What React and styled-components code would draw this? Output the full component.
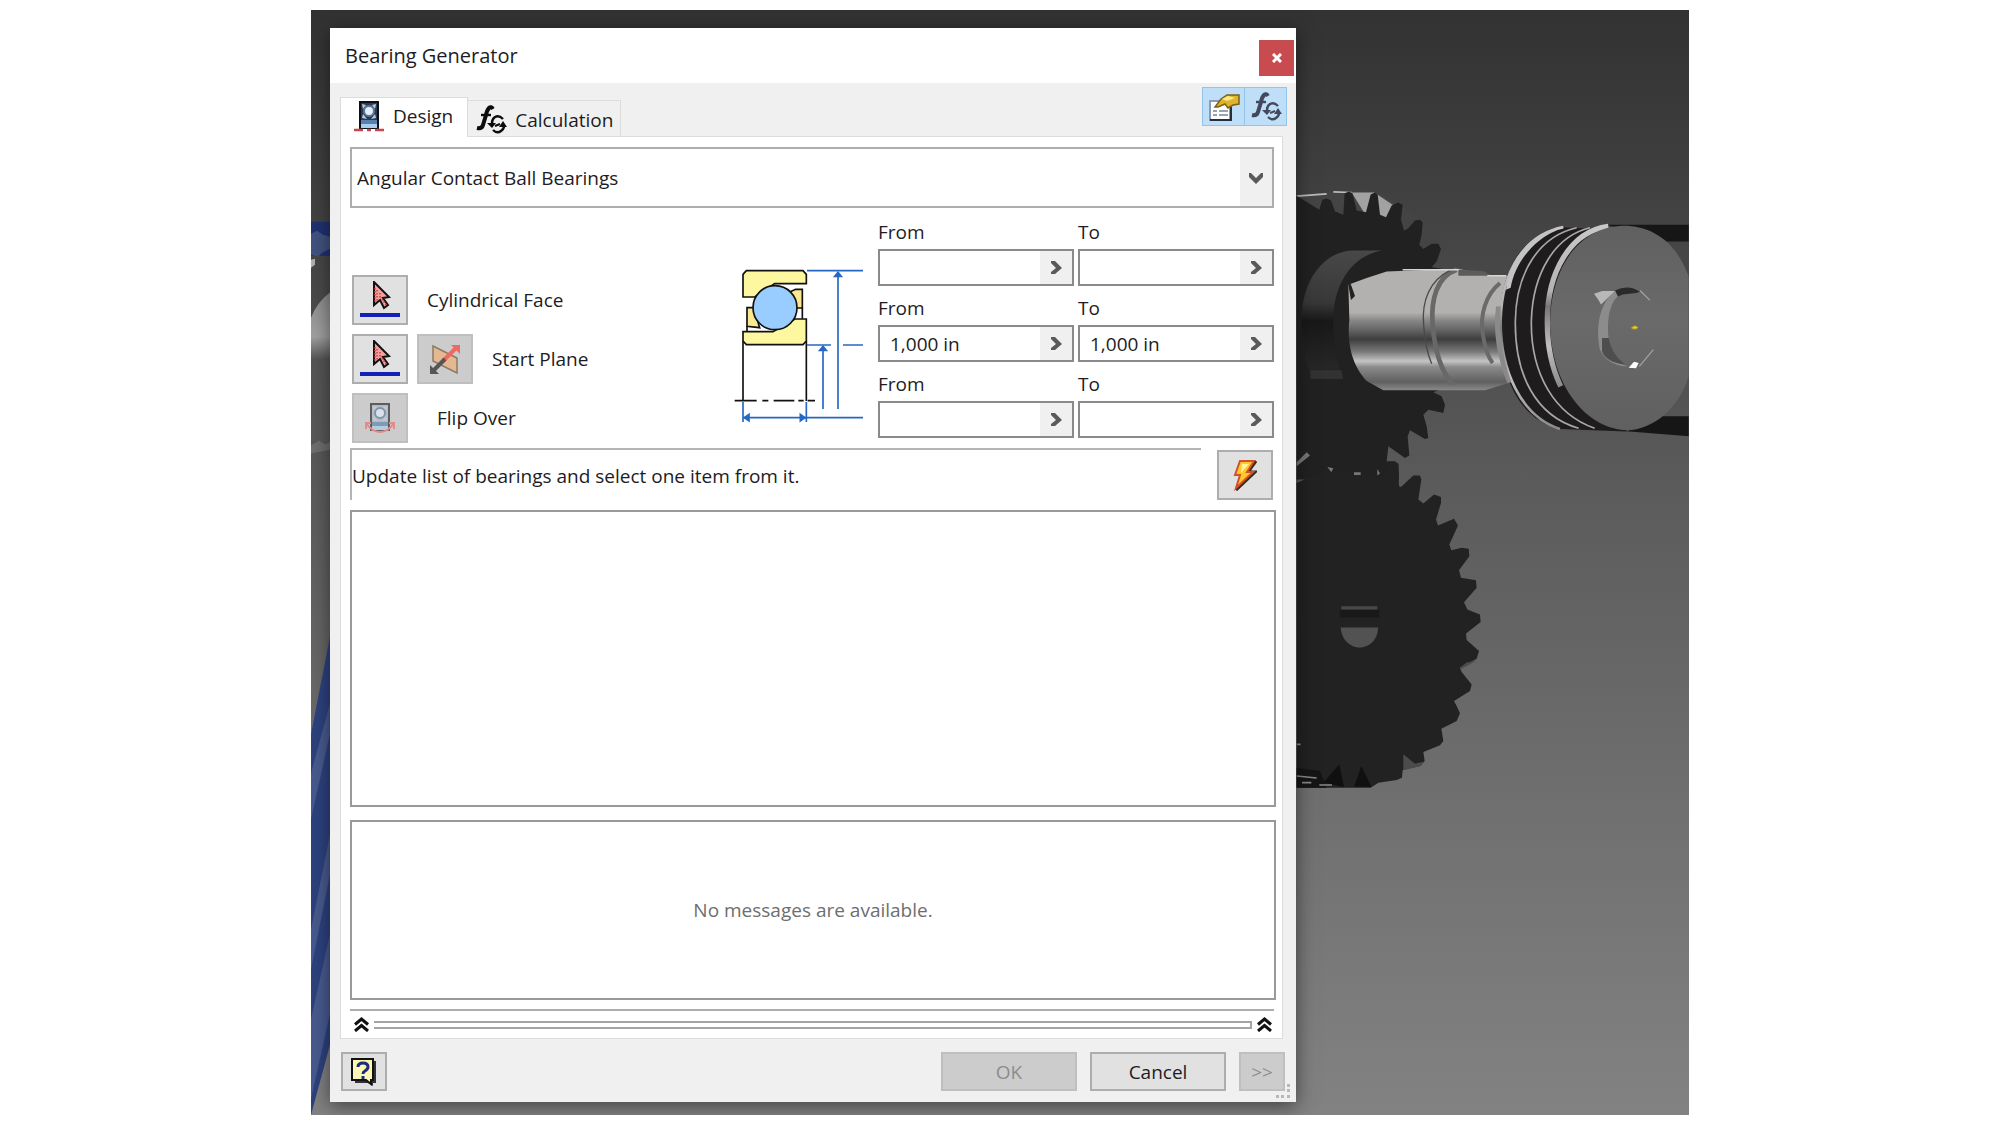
import React, { useState } from "react";
import styled, { createGlobalStyle } from "styled-components";

const Global = createGlobalStyle`
  *, *::before, *::after { box-sizing: border-box; }
  body { margin: 0; background: #fff; }
  body, button, input, select { font-family: "Open Sans", "Noto Sans", sans-serif; font-size: 19px; color: #1c1c24; }
`;

const Page = styled.main`
  display: grid;
  grid-template-columns: 311fr 1378fr 311fr;
  padding: 10px 0;
`;
const Viewport = styled.div`
  grid-column: 2;
  position: relative;
  overflow: hidden;
  display: grid;
  grid-template-columns: 19fr 966fr 393fr;
  padding: 18px 0 13px;
  background: linear-gradient(#323232, #3e3e3e 14%, #5b5b5b 43%, #707070 73%, #828282);
`;
const SceneSvg = styled.svg`
  position: absolute;
  inset: 0;
  width: 100%;
  height: 100%;
`;
const Dialog = styled.section`
  grid-column: 2;
  position: relative;
  background: #f0f0f0;
  box-shadow: 0 4px 18px rgba(0, 0, 0, 0.5);
`;
const TitleBar = styled.header`
  display: flex;
  justify-content: space-between;
  align-items: flex-start;
  height: 55px;
  padding: 12px 2px 0 15px;
  background: #fff;
`;
const Title = styled.h1`
  margin: 0;
  font-size: 20px;
  font-weight: 400;
  line-height: 32px;
`;
const CloseButton = styled.button`
  display: grid;
  place-items: center;
  width: 35px;
  height: 36px;
  padding: 0;
  border: 1px solid #c0504f;
  background: #c84b50;
`;
const TopRow = styled.div`
  display: flex;
  justify-content: space-between;
  height: 53px;
  padding: 0 9px 0 10px;
`;
const Tabs = styled.div`
  display: flex;
  align-items: flex-end;
`;
const Tab = styled.button`
  position: relative;
  display: flex;
  align-items: center;
  gap: 8px;
  height: ${(p) => (p.$active ? 40 : 36)}px;
  margin-bottom: ${(p) => (p.$active ? -1 : 0)}px;
  padding: ${(p) => (p.$active ? "0 14px 4px 12px" : "2px 7px 0")};
  border: 1px solid #dcdcdc;
  border-bottom: 0;
  border-left-width: ${(p) => (p.$active ? 1 : 0)}px;
  background: ${(p) => (p.$active ? "#fff" : "#f0f0f0")};
  white-space: nowrap;
`;
const Tools = styled.div`
  display: flex;
  height: 39px;
  margin-top: 4px;
`;
const Tool = styled.button`
  display: grid;
  place-items: center;
  width: 43px;
  padding: 0;
  border: 1px solid #92c4ec;
  background: #bfdff8;
  & + & { margin-left: -1px; }
`;
const Panel = styled.div`
  margin: 0 13px 0 10px;
  padding: 10px 8px 0 9px;
  border: 1px solid #dcdcdc;
  background: #fff;
`;
const SelectWrap = styled.div`
  display: grid;
  grid-template-columns: 1fr 32px;
  height: 61px;
  border: 2px solid #adadad;
`;
const Select = styled.select`
  grid-column: 1 / 3;
  grid-row: 1;
  appearance: none;
  padding: 0 5px;
  border: 0;
  border-radius: 0;
  background: #fff;
`;
const SelectArrow = styled.span`
  grid-column: 2;
  grid-row: 1;
  display: grid;
  place-items: center;
  background: #f0f0f0;
  pointer-events: none;
  z-index: 1;
`;
const Form = styled.div`
  display: grid;
  grid-template-columns: 383fr 145px 396fr;
  align-items: start;
  padding: 11px 0 5px;
`;
const Picks = styled.div`
  display: flex;
  flex-direction: column;
  gap: 9px;
  padding: 56px 0 0 2px;
`;
const Pick = styled.div`
  display: flex;
  align-items: center;
  gap: 9px;
`;
const PickLabel = styled.label`
  padding-left: ${(p) => p.$indent}px;
  white-space: nowrap;
`;
const IconButton = styled.button`
  display: grid;
  place-items: center;
  width: 56px;
  height: 50px;
  flex: none;
  padding: 0;
  border: 2px solid ${(p) => (p.disabled ? "#bfbfbf" : "#adadad")};
  background: ${(p) => (p.disabled ? "#cccccc" : "#e1e1e1")};
`;
const Diagram = styled.svg`
  width: 131px;
  height: 158px;
  margin-top: 48px;
`;
const Ranges = styled.div`
  display: grid;
  grid-template-columns: 1fr 1fr;
  gap: 9px 4px;
`;
const Field = styled.div`
  display: flex;
  flex-direction: column;
`;
const FieldLabel = styled.label`
  padding-bottom: 4px;
  line-height: 26px;
`;
const FieldBox = styled.div`
  display: grid;
  grid-template-columns: 1fr 32px;
  height: 37px;
  border: 2px solid #8a8a8a;
`;
const FieldInput = styled.input`
  min-width: 0;
  padding: 0 10px;
  border: 0;
  background: #fff;
  outline: 0;
`;
const FieldArrow = styled.button`
  display: grid;
  place-items: center;
  padding: 0;
  border: 0;
  background: #f0f0f0;
`;
const UpdateRow = styled.div`
  display: flex;
  align-items: flex-end;
  justify-content: space-between;
  gap: 16px;
  padding-right: 1px;
`;
const Hint = styled.p`
  flex: 1;
  height: 52px;
  margin: 0;
  border-top: 2px solid #b4b4b4;
  border-left: 2px solid #b4b4b4;
  line-height: 52px;
`;
const Box = styled.div`
  display: grid;
  place-items: center;
  height: ${(p) => p.$h}px;
  margin: ${(p) => p.$gap}px -2px 0 0;
  border: 2px solid #999;
  color: #6e6e6e;
`;
const Splitter = styled.div`
  display: flex;
  align-items: center;
  gap: 5px;
  height: 29px;
  margin-top: 9px;
  padding: 0 2px 0 4px;
  border-top: 2px solid #adadad;
`;
const Rail = styled.div`
  flex: 1;
  height: 8px;
  border: 2px solid #a4a4a4;
  border-left: 0;
`;
const Footer = styled.footer`
  display: flex;
  justify-content: space-between;
  padding: 13px 11px 11px;
`;
const Actions = styled.div`
  display: flex;
  gap: 13px;
`;
const PushButton = styled.button`
  display: grid;
  place-items: center;
  width: ${(p) => (p.$small ? 46 : 136)}px;
  height: 39px;
  padding: 0;
  border: 2px solid ${(p) => (p.disabled ? "#bfbfbf" : "#adadad")};
  background: ${(p) => (p.disabled ? "#cccccc" : "#e1e1e1")};
  color: ${(p) => (p.disabled ? "#8c8c8c" : "#1c1c24")};
`;
const Grip = styled.svg`
  position: absolute;
  right: 5px;
  bottom: 3px;
  width: 16px;
  height: 16px;
`;

/* gear outlines, traced clockwise from the edge of the dialog */
const UPPER_GEAR =
  "50,108 118,150 127,120 140,116 153,122 165,155 190,165 194,100 207,95 217,100 230,152 258,157 272,104 285,98 293,104 300,165 318,172 335,137 355,128 368,135 363,180 372,213 385,205 405,182 420,180 428,188 425,225 418,255 430,268 455,252 475,252 483,268 470,305 455,322 530,335 530,670 460,698 485,710 495,735 490,760 445,750 430,765 440,800 445,835 435,838 390,812 383,830 388,888 375,895 325,860 320,905 345,905 355,915 357,960 50,960";
const LOWER_GEAR =
  "50,130 140,90 300,112 325,75 340,65 355,72 357,140 363,142 400,108 420,108 424,120 415,180 430,192 462,165 483,172 483,190 468,240 474,258 522,238 534,258 508,315 514,332 545,325 566,328 568,350 537,392 543,415 588,422 590,445 552,488 562,510 600,525 602,548 558,582 560,602 597,635 590,658 540,685 545,698 575,735 570,755 522,785 530,800 540,822 530,845 484,868 490,905 480,918 430,938 434,965 420,980 368,992 366,1015 350,1022 295,1030 272,1045 50,1045";

function Scene() {
  return (
    <SceneSvg viewBox="311 10 1378 1106" preserveAspectRatio="none" aria-hidden="true">
      <defs>
        <linearGradient id="shaft" x1="0" y1="0" x2="0" y2="1">
          <stop offset="0" stopColor="#b3b1af" />
          <stop offset="0.36" stopColor="#b3b1af" />
          <stop offset="0.43" stopColor="#858585" />
          <stop offset="0.5" stopColor="#666" />
          <stop offset="0.58" stopColor="#3e3e3e" />
          <stop offset="0.68" stopColor="#777" />
          <stop offset="0.76" stopColor="#c4c4c4" />
          <stop offset="0.81" stopColor="#8a8a8a" />
          <stop offset="0.93" stopColor="#606060" />
          <stop offset="1" stopColor="#8a8a8a" />
        </linearGradient>
        <linearGradient id="face" x1="0" y1="0" x2="0" y2="1">
          <stop offset="0" stopColor="#606060" />
          <stop offset="0.45" stopColor="#6a6a6a" />
          <stop offset="1" stopColor="#606060" />
        </linearGradient>
        <linearGradient id="bore" x1="0" y1="0" x2="0" y2="1">
          <stop offset="0" stopColor="#484848" />
          <stop offset="0.4" stopColor="#383838" />
          <stop offset="0.55" stopColor="#181818" />
          <stop offset="0.9" stopColor="#262626" />
          <stop offset="1" stopColor="#212121" />
        </linearGradient>
        <linearGradient id="rim" x1="0" y1="0" x2="0" y2="1">
          <stop offset="0" stopColor="#c8c8c8" />
          <stop offset="0.4" stopColor="#b4b4b4" />
          <stop offset="0.5" stopColor="#777" />
          <stop offset="0.75" stopColor="#c0c0c0" />
          <stop offset="1" stopColor="#8a8a8a" />
        </linearGradient>
        <linearGradient id="knob" x1="0" y1="0" x2="0" y2="1">
          <stop offset="0" stopColor="#8c8c8c" />
          <stop offset="0.3" stopColor="#a0a0a0" />
          <stop offset="0.45" stopColor="#555" />
          <stop offset="1" stopColor="#585858" />
        </linearGradient>
      </defs>

      <g>
        <path d="M311 222h20v34h-20z" fill="#1f3270" />
        <path d="M311 234l6-3 6 4 7 2v12l-8 4-4 4-7-2z" fill="#40527e" />
        <path d="M311 260l4-1v6l-4 3z" fill="#b0b0b0" />
        <path d="M311 318q6-16 20-26v150h-20z" fill="url(#knob)" />
        <path d="M311 446l8-5 6 4 6-3v8l-20 4z" fill="#6e6e6e" />
        <path d="M331 632v410l-20 74V735z" fill="#2d427e" />
        <path d="M331 700v30l-20 90v-46zM331 830v40l-20 100v-40zM331 930v80l-20 90v-80z" fill="#485a8e" />
      </g>

      <g transform="translate(1280 160) scale(0.33333)">
        <path d="M50 105L165 96h120l85 45 60 50 50 68-40 66H50z" fill="#444" />
        <path d="M215 98h68l75 50-20 40-80-20z" fill="#a2a2a2" />
        <path d="M50 109l90-7M160 96l55 2" stroke="#bbb" strokeWidth="5" fill="none" />
        <polygon points={UPPER_GEAR} fill="#212121" />
        <path d="M65 470C70 350 140 272 220 272h85C210 290 160 380 160 480q0 110 30 180H95Q60 560 65 470z" fill="url(#bore)" />
        <path d="M90 632h95l4 26H92z" fill="#323232" />

        <path d="M205 375l55-20 60-20 215-8 90 20 60 0 10 320-80 25H310l-50-28C220 620 200 560 208 480z" fill="url(#shaft)" />
        <path d="M205 375q2-10 8 0l12 34-12 12z" fill="#222" />
        <path d="M530 330c-60 20-78 90-72 165s25 140 60 178" fill="none" stroke="#686868" strokeWidth="14" />
        <path d="M510 332c-60 30-86 90-79 165 4 50 12 88 24 115" fill="none" stroke="#4a4a4a" strokeWidth="4" />
        <path d="M660 370c-45 35-60 100-52 150 6 44 14 70 30 90" fill="none" stroke="#6a6a6a" strokeWidth="12" />
        <path d="M535 330l75 4 25 14h-100z" fill="#5c5c5c" />
        <path d="M368 330h168M622 348h56" stroke="#d6d6d6" strokeWidth="4" />

        <path d="M980 195h246v50h-80z" fill="#161616" />
        <path d="M1040 815l100-45h86v60z" fill="#161616" />
        <path d="M850 202C720 220 662 340 660 480c-2 180 60 300 180 328l200 8 60-600z" fill="#1f1c1d" />
        <path d="M850 202C735 225 666 330 662 480c-2 150 60 290 178 328" fill="none" stroke="url(#rim)" strokeWidth="8" />
        <path d="M820 208C740 235 690 300 678 390l14-6C705 310 760 240 830 212z" fill="#c4c4c4" />
        <path d="M648 440q-14 110 34 230l12-2q-40-110-32-228z" fill="#8a8a8a" />
        <path d="M890 204c-110 25-182 130-184 280-2 160 60 285 190 322" fill="none" stroke="#a8a8a8" strokeWidth="5" />
        <path d="M930 204c-105 25-172 135-176 280-2 160 70 280 190 322" fill="none" stroke="#a8a8a8" strokeWidth="5" />
        <path d="M985 200C870 215 800 340 802 490c0 80 16 140 40 190" fill="none" stroke="url(#rim)" strokeWidth="16" />
        <path d="M1226 350C1190 250 1120 198 1030 198 900 200 812 320 810 490c2 190 110 318 230 322 80 0 160-70 186-162z" fill="url(#face)" />
        <path d="M1008 392C960 425 945 500 960 570c10 25 40 50 82 50-42-20-58-50-58-115 0-45 10-80 32-98z" fill="#8c8c8c" />
        <path d="M966 535h20q8 50 50 80-58-6-70-40z" fill="#4e4e4e" />
        <path d="M942 402l25-8h38l-42 40-8-14z" fill="#b8b8b8" />
        <path d="M1005 392q40-20 75 4l-12 4-40 4-14 6z" fill="#2a2a2a" />
        <path d="M1080 392l30 30M1120 570l-42 50" stroke="#a0a0a0" strokeWidth="4" />
        <path d="M1046 624l16-18 14 4-8 16z" fill="#fff" />
        <path d="M1054 504l10-6 10 4-4 6h-12z" fill="#e6d028" stroke="#a89528" strokeWidth="3" />
      </g>

      <g transform="translate(1280 440) scale(0.33333)">
        <polygon points={LOWER_GEAR} fill="#222" />
        <path d="M50 68l30-30 10 10-40 32zM142 82l18 4-6 12zM222 98h20v8h-20zM292 88l8 14-8 6z" fill="#777" />
        <path d="M370 945l35 28 24-6-5 12-54 14zM540 685l20-16 30-6-46 26z" fill="#4c4c4c" />
        <path d="M130 1030L178 975l14 68zM222 1042l22-62 30 62z" fill="#101010" />
        <path d="M50 985l70 10 20 50H50z" fill="#151515" />
        <path d="M50 1010l60 6M118 1037h38M66 1030h28M50 915h12" stroke="#888" strokeWidth="5" />
        <path d="M184 500h108v10H184z" fill="#484848" />
        <path d="M180 512h118v22H180z" fill="#191919" />
        <path d="M182 564h112c0 40-30 60-56 60s-54-22-56-60z" fill="#525252" />
      </g>
    </SceneSvg>
  );
}

const Chevron = ({ down }) => (
  <svg width="16" height="16" viewBox="0 0 16 16" aria-hidden="true">
    <path
      d={down ? "M1 3h2l5 5 5-5h2v4l-7 7-7-7z" : "M3 1h4l7 7-7 6H3v-2l5-4-5-5z"}
      fill="#5a5a5a"
    />
  </svg>
);

const DoubleUp = () => (
  <svg width="15" height="15" viewBox="0 0 15 15" aria-hidden="true">
    <path d="M1 7.500l6.500-5.500L14 7.500M1 14l6.500-5.500L14 14" fill="none" stroke="#111" strokeWidth="3" />
  </svg>
);

const BearingGlyph = ({ flip }) => (
  <svg width="32" height="32" viewBox="0 0 32 32" aria-hidden="true" opacity={flip ? 0.65 : 1}>
    <path d="M6 1h20v27H6z" fill={flip ? "#aab4c0" : "#2c3a52"} />
    <path d="M7 2h18v26H7z" fill="none" stroke={flip ? "#222" : "#0c0f18"} strokeWidth="2" />
    <path d="M9 4l4 1-3 4zM23 4l-4 1 3 4zM9 18l1-4 4 5zM23 18l-1-4-4 5z" fill="#b9cce0" />
    <circle cx="16" cy="11" r="5" fill="#e4edf8" stroke="#5a7698" strokeWidth="2" />
    <path d="M8 20h16v4H8z" fill="#5680b0" />
    <path d="M8 24h16v4H8z" fill="#a9cdec" />
    {flip ? (
      <path d="M2 27v-6h5M30 27v-6h-5M2 21q6 9 14 9t14-9" fill="none" stroke="#f06868" strokeWidth="2" />
    ) : (
      <path d="M1 30h9M14 30h4M22 30h9" stroke="#c9464c" strokeWidth="2.500" />
    )}
  </svg>
);

const FxGlyph = ({ color = "#0c0c0c" }) => (
  <svg width="32" height="30" viewBox="0 0 32 30" fill="none" stroke={color} aria-hidden="true">
    <path d="M18 4q-2-3-4-1-2 2-3 7l-3 10q-1 4-6 3" strokeWidth="4" />
    <path d="M6 10h10" strokeWidth="2.400" />
    <path d="M28 14q-4-4-8-2-3 2-3 6M18 25q4 4 8 1 3-2 3-5" strokeWidth="2.400" />
    <path d="M12 18h9l-4 5zM24 22h8l-4-6z" fill={color} stroke="none" />
    <path d="M20 21l5-2" strokeWidth="2" />
  </svg>
);

const PropsGlyph = () => (
  <svg width="32" height="28" viewBox="0 0 32 28" aria-hidden="true">
    <path d="M2 8h20v19H2z" fill="#fff" stroke="#8a9cb4" strokeWidth="2" />
    <path d="M2 27h21V14" fill="none" stroke="#26303c" strokeWidth="2" />
    <path d="M5 18h4M5 22h4M11 18h9M11 22h9" stroke="#9aa2b4" strokeWidth="2" />
    <path d="M7 14l6-8 6-4h12v9l-6 1-5 3-3-4-7 3z" fill="#dfb42a" stroke="#7a6218" strokeWidth="1.500" />
    <path d="M14 6l6-3 7 2-8 3z" fill="#fbe88a" />
  </svg>
);

const PickGlyph = () => (
  <svg width="40" height="38" viewBox="0 0 40 38" aria-hidden="true">
    <path d="M14 1l15 15-6 1 5 7-4 3-4-8-6 5z" fill="#f4a0a0" stroke="#111" strokeWidth="2" />
    <path d="M15 7v14M17 9v11M20 12v6M22 18l4 6" stroke="#d03c3c" strokeWidth="1.500" strokeDasharray="1.500 1.500" />
    <path d="M0 34h40" stroke="#1420b8" strokeWidth="4" />
  </svg>
);

const PlaneGlyph = () => (
  <svg width="32" height="32" viewBox="0 0 32 32" aria-hidden="true">
    <path d="M4 3l24 12v15L4 18z" fill="#e4b890" stroke="#8c7a68" strokeWidth="1.500" />
    <path d="M14 18L28 4" stroke="#f06860" strokeWidth="4" />
    <path d="M22 2h9v9z" fill="#f06860" />
    <path d="M16 16L4 28" stroke="#555" strokeWidth="4" />
    <path d="M1 22v9h9z" fill="#555" />
  </svg>
);

const BoltGlyph = () => (
  <svg width="24" height="32" viewBox="0 0 24 32" aria-hidden="true">
    <path d="M23 2l-8 11h7L3 31" fill="none" stroke="#3a2a1a" strokeWidth="3" />
    <path d="M7 2h14l-7 11h6L3 29l4-13H2z" fill="#ffc928" stroke="#d4502c" strokeWidth="2" />
    <path d="M9 5h7l-8 9z" fill="#fff29a" />
  </svg>
);

const HelpGlyph = () => (
  <svg width="28" height="30" viewBox="0 0 28 30" aria-hidden="true">
    <path d="M5 4h21v22h-3v3l-5-3H5z" fill="#333" />
    <path d="M2 2h21v21h-2v4l-5-4H2z" fill="#fdf6b4" stroke="#111" strokeWidth="2" />
    <path d="M8 10q0-4 5-4t5 4q0 2-3 4-2 1-2 3M13 19v3" fill="none" stroke="#1f2c78" strokeWidth="3" />
  </svg>
);

const CloseGlyph = () => (
  <svg width="10" height="10" viewBox="0 0 10 10" aria-hidden="true">
    <path d="M1 1l8 8M9 1L1 9" stroke="#fff" strokeWidth="3" />
  </svg>
);

const BearingDiagram = () => (
  <Diagram viewBox="100 140 393 474" aria-hidden="true">
    <g stroke="#111" strokeWidth="5">
      <path d="M130 230v-68l10-11h170l10 11v28h-95l-60 40z" fill="#fdf8a0" />
      <path d="M270 215l18-8h20v56h-20zM142 262h20l18 60-38-4z" fill="#fbe890" />
      <path d="M142 318v16M308 263v32" />
      <path d="M130 334h90l66-38h34v66l-10 11H140l-10-11z" fill="#fdf8a0" />
      <circle cx="226" cy="262" r="66" fill="#99ccff" />
      <path d="M130 362v180M320 362v180" />
      <path d="M105 541h66M188 541h18M222 541h62M296 541h16M324 541h22" />
    </g>
    <g stroke="#2568c4" strokeWidth="5" fill="#2568c4">
      <path d="M322 151h168M322 374h72M430 374h60M130 592h360M130 545v60M320 545v60M415 160v406M370 384v182" />
      <path d="M415 156l10 12h-20zM370 378l10 12h-20zM134 592l14-10v20zM316 592l-14-10v20z" />
    </g>
  </Diagram>
);

function RangeField({ id, label, initial }) {
  const [value, setValue] = useState(initial);
  return (
    <Field>
      <FieldLabel htmlFor={id}>{label}</FieldLabel>
      <FieldBox>
        <FieldInput id={id} value={value} onChange={(e) => setValue(e.target.value)} />
        <FieldArrow type="button" aria-label={label}>
          <Chevron />
        </FieldArrow>
      </FieldBox>
    </Field>
  );
}

const RANGES = [
  ["outer", ""],
  ["inner", "1,000 in"],
  ["width", ""],
];

export default function App() {
  return (
    <Page>
      <Global />
      <Viewport>
        <Scene />
        <Dialog role="dialog" aria-labelledby="title">
          <TitleBar>
            <Title id="title">Bearing Generator</Title>
            <CloseButton type="button" aria-label="Close">
              <CloseGlyph />
            </CloseButton>
          </TitleBar>
          <TopRow>
            <Tabs role="tablist">
              <Tab type="button" role="tab" aria-selected="true" $active>
                <BearingGlyph />
                Design
              </Tab>
              <Tab type="button" role="tab" aria-selected="false">
                <FxGlyph />
                Calculation
              </Tab>
            </Tabs>
            <Tools>
              <Tool type="button" aria-label="Properties">
                <PropsGlyph />
              </Tool>
              <Tool type="button" aria-label="Calculate">
                <FxGlyph color="#44485c" />
              </Tool>
            </Tools>
          </TopRow>
          <Panel>
            <SelectWrap>
              <Select aria-label="Bearing type">
                <option>Angular Contact Ball Bearings</option>
              </Select>
              <SelectArrow>
                <Chevron down />
              </SelectArrow>
            </SelectWrap>
            <Form>
              <Picks>
                <Pick>
                  <IconButton type="button" id="pick-face">
                    <PickGlyph />
                  </IconButton>
                  <PickLabel htmlFor="pick-face" $indent={10}>Cylindrical Face</PickLabel>
                </Pick>
                <Pick>
                  <IconButton type="button" id="pick-plane">
                    <PickGlyph />
                  </IconButton>
                  <IconButton type="button" disabled aria-label="Flip plane">
                    <PlaneGlyph />
                  </IconButton>
                  <PickLabel htmlFor="pick-plane" $indent={10}>Start Plane</PickLabel>
                </Pick>
                <Pick>
                  <IconButton type="button" id="flip" disabled>
                    <BearingGlyph flip />
                  </IconButton>
                  <PickLabel htmlFor="flip" $indent={20}>Flip Over</PickLabel>
                </Pick>
              </Picks>
              <BearingDiagram />
              <Ranges>
                {RANGES.map(([key, value]) => (
                  <React.Fragment key={key}>
                    <RangeField id={`${key}-from`} label="From" initial={value} />
                    <RangeField id={`${key}-to`} label="To" initial={value} />
                  </React.Fragment>
                ))}
              </Ranges>
            </Form>
            <UpdateRow>
              <Hint>Update list of bearings and select one item from it.</Hint>
              <IconButton type="button" aria-label="Update">
                <BoltGlyph />
              </IconButton>
            </UpdateRow>
            <Box $h={297} $gap={10} />
            <Box $h={180} $gap={13}>No messages are available.</Box>
            <Splitter>
              <DoubleUp />
              <Rail />
              <DoubleUp />
            </Splitter>
          </Panel>
          <Footer>
            <PushButton type="button" $small aria-label="Help">
              <HelpGlyph />
            </PushButton>
            <Actions>
              <PushButton type="button" disabled>OK</PushButton>
              <PushButton type="button">Cancel</PushButton>
              <PushButton type="button" $small disabled>&gt;&gt;</PushButton>
            </Actions>
          </Footer>
          <Grip viewBox="0 0 16 16" aria-hidden="true">
            <path d="M12 1h3v3h-3zM12 6h3v3h-3zM12 12h3v3h-3zM6 12h3v3H6zM1 12h3v3H1z" fill="#b8b8b8" />
          </Grip>
        </Dialog>
      </Viewport>
    </Page>
  );
}
